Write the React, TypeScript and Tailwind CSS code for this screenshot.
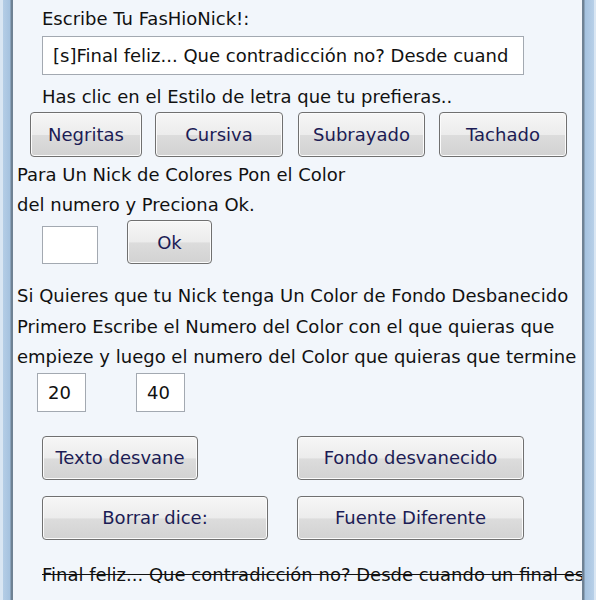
import { useState } from "react";

const font = { fontFamily: '"DejaVu Sans", "Liberation Sans", sans-serif' };

function XpButton({
  label,
  className = "",
}: {
  label: string;
  className?: string;
}) {
  return (
    <button
      type="button"
      className={`relative flex items-center justify-center overflow-hidden rounded-[4px] border border-[#707070] bg-[linear-gradient(to_bottom,#f6f6f6_0%,#ececec_50%,#dcdcdc_52%,#d2d2d2_100%)] text-[18px] text-[#1c1c55] shadow-[inset_0_0_0_1px_#fbfbfb] ${className}`}
    >
      {label}
    </button>
  );
}

function XpInput({
  value,
  className = "",
}: {
  value: string;
  className?: string;
}) {
  return (
    <div
      className={`flex items-center overflow-hidden whitespace-nowrap border border-[#a3a9b1] bg-white text-[18px] text-[#111] ${className}`}
    >
      {value}
    </div>
  );
}

export default function App() {
  const [nick] = useState(
    "[s]Final feliz... Que contradicción no? Desde cuando un final es feliz"
  );
  // the field only has room for the start of the nick
  const visible = nick.slice(0, 51);
  const preview = nick.replace("[s]", "");

  return (
    <div
      className="flex h-[600px] w-[596px] overflow-hidden bg-[#f2f6fb]"
      style={font}
    >
      {/* window frame, left */}
      <div className="flex w-[13px] shrink-0">
        <div className="w-[3px] bg-[#d9e6f3]" />
        <div className="w-[7px] bg-[linear-gradient(to_right,#b4cde6,#a5c2df)]" />
        <div className="w-[1px] bg-[#8aa3bb]" />
        <div className="w-[2px] bg-[#6f8294]" />
      </div>

      <div className="flex min-w-0 flex-1 flex-col pt-[4px] text-[18px] text-[#111]">
        <div className="ml-[29px] h-[30px] leading-[30px]">
          Escribe Tu FasHioNick!:
        </div>
        <XpInput
          value={visible}
          className="ml-[29px] mt-[2px] h-[39px] w-[482px] pl-[10px]"
        />
        <div className="ml-[29px] mt-[7px] h-[30px] leading-[30px]">
          Has clic en el Estilo de letra que tu prefieras..
        </div>

        <div className="flex h-[45px]">
          <XpButton label="Negritas" className="ml-[17px] w-[112px]" />
          <XpButton label="Cursiva" className="ml-[13px] w-[128px]" />
          <XpButton label="Subrayado" className="ml-[15px] w-[127px]" />
          <XpButton label="Tachado" className="ml-[14px] w-[128px]" />
        </div>

        <div className="ml-[4px] mt-[3px] leading-[30px]">
          Para Un Nick de Colores Pon el Color
          <br />
          del numero y Preciona Ok.
        </div>

        <div className="flex h-[44px] items-end">
          <XpInput value="" className="ml-[29px] h-[38px] w-[56px]" />
          <XpButton label="Ok" className="ml-[29px] h-[44px] w-[85px]" />
        </div>

        <div className="ml-[4px] mt-[17px] whitespace-nowrap leading-[30.5px]">
          Si Quieres que tu Nick tenga Un Color de Fondo Desbanecido
          <br />
          Primero Escribe el Numero del Color con el que quieras que
          <br />
          empieze y luego el numero del Color que quieras que termine
        </div>

        <div className="flex">
          <XpInput value="20" className="ml-[24px] h-[39px] w-[49px] pl-[10px]" />
          <XpInput value="40" className="ml-[50px] h-[39px] w-[49px] pl-[10px]" />
        </div>

        <div className="mt-[24px] flex h-[44px] items-stretch">
          <XpButton label="Texto desvane" className="ml-[29px] w-[156px]" />
          <XpButton label="Fondo desvanecido" className="ml-[99px] w-[227px]" />
        </div>
        <div className="mt-[16px] flex h-[44px]">
          <XpButton label="Borrar dice:" className="ml-[29px] w-[226px]" />
          <XpButton label="Fuente Diferente" className="ml-[29px] w-[227px]" />
        </div>

        <div className="ml-[29px] mt-[20px] h-[30px] whitespace-nowrap leading-[30px] line-through">
          {preview}
        </div>
      </div>

      {/* window frame, right */}
      <div className="flex w-[14px] shrink-0">
        <div className="w-[2px] bg-[#6f8294]" />
        <div className="w-[1px] bg-[#8aa3bb]" />
        <div className="w-[9px] bg-[linear-gradient(to_right,#a5c2df,#b8d0e8)]" />
        <div className="w-[2px] bg-[#d9e6f3]" />
      </div>
    </div>
  );
}
